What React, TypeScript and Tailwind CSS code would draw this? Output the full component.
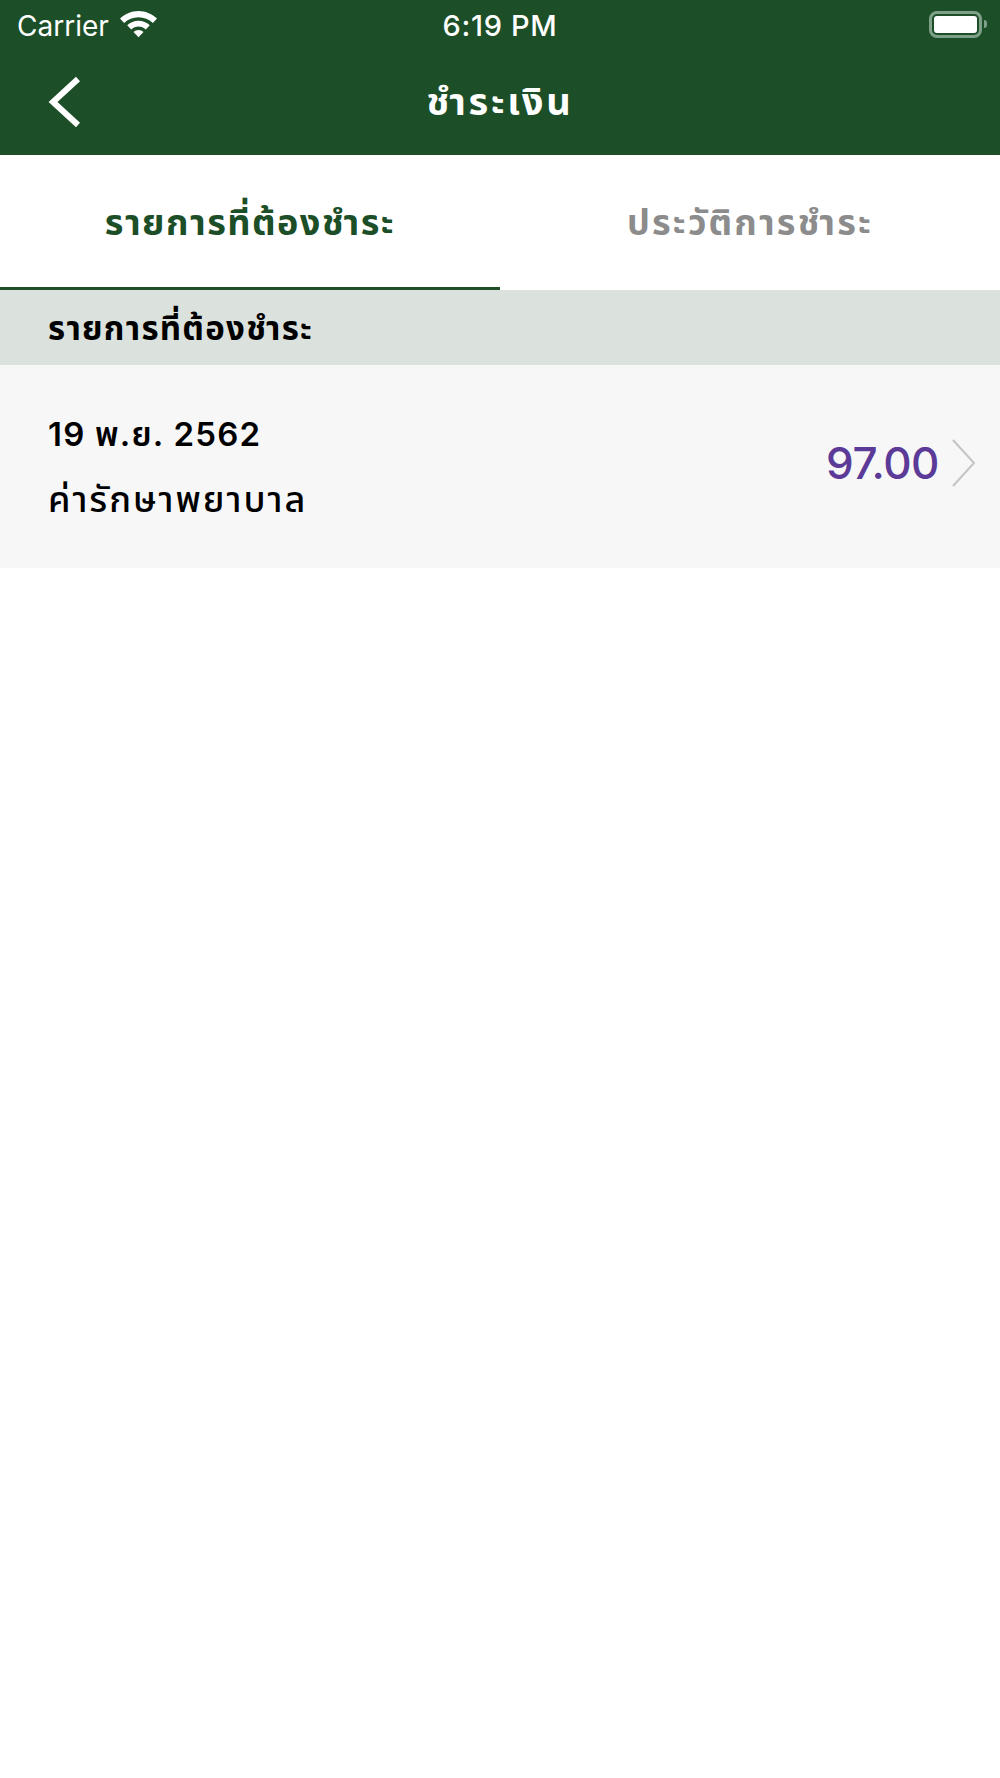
const sans = "font-['Liberation_Sans','Noto_Sans_Thai','Noto_Sans',sans-serif]";

function StatusBar() {
  return (
    <div className="relative flex h-[52px] items-center justify-between pl-[17px] pr-[13px] text-white">
      <div className="flex items-center gap-[11px]">
        <span className="font-['Inter',sans-serif] text-[28px] font-normal leading-none">Carrier</span>
        <svg className="mb-[3px]" width="37" height="27" viewBox="0 0 37 27" fill="#fff">
          <path d="M18.5 0C11.700 0 5.500 2.700 0 7.600l4.100 4.300C8 8.400 13 6.200 18.500 6.200S29 8.400 32.900 11.900L37 7.600C31.500 2.700 25.300 0 18.500 0z" />
          <path d="M18.500 9.800c-4.200 0-8.100 1.600-11.300 4.500l4 4.200c2-1.800 4.600-2.900 7.300-2.900s5.300 1.100 7.300 2.900l4-4.200c-3.200-2.900-7.100-4.500-11.300-4.500z" />
          <path d="M18.500 19c-1.900 0-3.700.7-5 2l5 5.300 5-5.300c-1.300-1.300-3.100-2-5-2z" />
        </svg>
      </div>
      <span className="absolute left-1/2 top-[11px] -translate-x-1/2 font-['Inter',sans-serif] text-[29px] font-medium leading-none tracking-[0.7px]">6:19 PM</span>
      <div className="mb-[4px] flex items-center gap-[2px]">
        <div className="flex h-[27px] w-[53px] items-center justify-center rounded-[8px] border-[3px] border-[#7fa088]">
          <div className="h-[17px] w-[43px] rounded-[3px] bg-white" />
        </div>
        <div className="h-[8px] w-[3px] rounded-r-full bg-[#7fa088]" />
      </div>
    </div>
  );
}

function NavBar() {
  return (
    <div className="relative flex h-[103px] items-center justify-center">
      <svg className="absolute left-[47px] top-[24px]" width="34" height="52" viewBox="0 0 34 52" fill="none" stroke="#fff" strokeWidth="6">
        <path d="M31 3 L6 26 L31 49" />
      </svg>
      <h1 className={`${sans} mb-[3px] text-[38px] font-bold leading-none tracking-[2.7px] text-white`}>ชำระเงิน</h1>
    </div>
  );
}

function Tabs() {
  return (
    <div className={`${sans} grid h-[135px] grid-cols-2 text-center text-[36px] font-bold`}>
      <div className="flex items-center justify-center border-b-[3px] border-[#1c4e27] pt-[3px] tracking-[1.5px] text-[#1c4e27]">
        รายการที่ต้องชำระ
      </div>
      <div className="flex items-center justify-center border-b-[3px] border-transparent pt-[3px] tracking-[2.2px] text-[#8c8c8c]">
        ประวัติการชำระ
      </div>
    </div>
  );
}

export default function App() {
  return (
    <div className="min-h-[1778px] w-[1000px] bg-white">
      <div className="bg-[#1c4e27]">
        <StatusBar />
        <NavBar />
      </div>
      <Tabs />
      <div className={`${sans} flex h-[75px] items-center bg-[#dbe1dc] pl-[48px] pt-[3px] text-[33px] font-bold tracking-[1.3px] text-black`}>
        รายการที่ต้องชำระ
      </div>
      <div className="flex h-[203px] items-center justify-between bg-[#f7f7f8] pl-[48px] pr-[24px]">
        <div className={`${sans} flex flex-col gap-[22px] text-[36px] font-medium leading-[43px] tracking-[2px] text-black`}>
          <span className="font-['Inter','Noto_Sans_Thai','Noto_Sans',sans-serif] text-[33px] font-semibold tracking-[1.2px]">19 พ.ย. 2562</span>
          <span>ค่ารักษาพยาบาล</span>
        </div>
        <div className="flex items-center gap-[12px] pb-[8px]">
          <span className="font-['Inter',sans-serif] text-[44px] font-medium leading-none tracking-[-0.5px] text-[#5b3b97]">97.00</span>
          <svg width="25" height="50" viewBox="0 0 25 50" fill="none" stroke="#c4c4c4" strokeWidth="2">
            <path d="M2 2 L23 25 L2 48" />
          </svg>
        </div>
      </div>
    </div>
  );
}
